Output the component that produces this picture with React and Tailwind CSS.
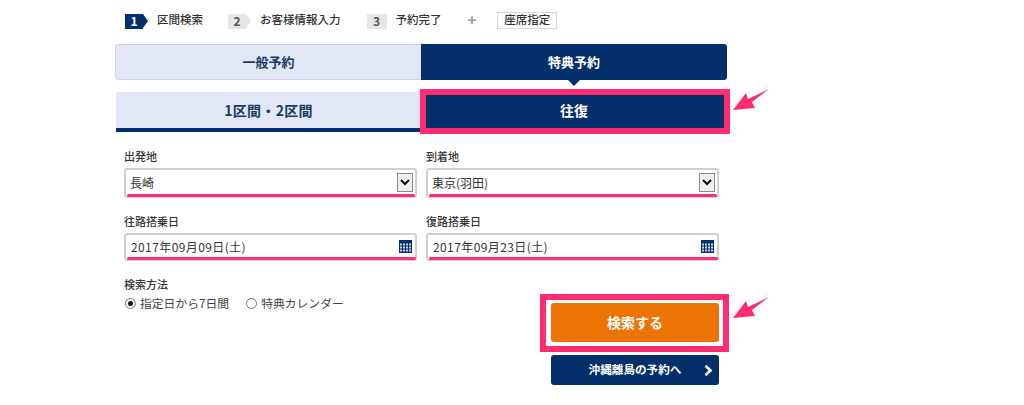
import React from 'react'

const FONT = { fontFamily: '"Noto Sans CJK JP", "Noto Sans", sans-serif' }

function Step({ num, label, active, arrow }) {
    return (
        <div className="flex items-center">
            <span
                className={`flex items-center justify-center mt-[2px] h-[15px] text-[12px] font-bold ${arrow ? 'w-[18px]' : 'w-[20px]'} ${active ? 'bg-[#03306b] text-white' : 'bg-[#e6e6e6] text-[#555]'}`}
            >
                {num}
            </span>
            {arrow && (
                <span
                    className={`mt-[2px] w-0 h-0 border-y-[7.5px] border-y-transparent border-l-[5px] ${active ? 'border-l-[#03306b]' : 'border-l-[#e6e6e6]'}`}
                />
            )}
            <span className="ml-[9px] text-[11.5px] font-medium text-[#333]">{label}</span>
        </div>
    )
}

function Arrow({ className }) {
    return (
        <svg className={`absolute ${className}`} width="36" height="22" viewBox="0 0 36 22">
            <path d="M0 21 L13 4 L15 10 L36 0 L19 13 L22 19 Z" fill="#ff2d6f" />
        </svg>
    )
}

function SelectField({ label, value }) {
    return (
        <div>
            <div className="text-[11px] font-medium text-[#333] leading-[14px] h-[14px]">{label}</div>
            <div className="relative mt-[5px] h-[30px] rounded-[3px] border-2 border-[#cfcfcf] bg-white flex items-center justify-between pl-[4px] pr-[2px]">
                <span className="text-[12px] text-[#333]">{value}</span>
                <span className="w-[16px] h-[19px] -mt-[2px] border border-[#8a8a8a] bg-[#efefef] flex items-center justify-center">
                    <svg width="10" height="7" viewBox="0 0 10 7">
                        <path d="M1 1 L5 5 L9 1" fill="none" stroke="#111" strokeWidth="2" />
                    </svg>
                </span>
                <div className="absolute left-[1px] right-[0px] -bottom-[1px] h-[3px] rounded-full bg-[#ff2d6f]" />
            </div>
        </div>
    )
}

function DateField({ label, value }) {
    return (
        <div className="mt-[16px]">
            <div className="text-[11px] font-medium text-[#333] leading-[14px] h-[14px]">{label}</div>
            <div className="relative mt-[5px] h-[28px] rounded-[3px] border-2 border-[#cfcfcf] bg-white flex items-center justify-between pl-[5px] pr-[3px]">
                <span className="text-[12px] text-[#333] tracking-[0.4px] -mt-[1px]">{value}</span>
                <svg width="13" height="13" viewBox="0 0 13 13" className="-mt-[1px]">
                    <rect width="13" height="13" fill="#03306b" />
                    {[1, 4, 7, 10].map((x) =>
                        [3, 6, 9].map((y) => (
                            <rect key={`${x}-${y}`} x={x} y={y + 0.5} width="2" height="2" fill="#c9d3e4" />
                        ))
                    )}
                </svg>
                <div className="absolute left-[1px] -right-[1px] -bottom-[1px] h-[3px] rounded-full bg-[#ff2d6f]" />
            </div>
        </div>
    )
}

function Radio({ checked, label }) {
    return (
        <div className="flex items-center">
            <span className="w-[11px] h-[11px] rounded-full border border-[#777] bg-white flex items-center justify-center">
                {checked && <span className="w-[5px] h-[5px] rounded-full bg-[#111]" />}
            </span>
            <span className="ml-[4px] text-[11.8px] text-[#444]">{label}</span>
        </div>
    )
}

export default function App() {
    return (
        <div className="relative w-[1024px] h-[405px] bg-white overflow-hidden" style={FONT}>
            {/* Steps */}
            <div className="flex items-center h-[18px] mt-[11px] ml-[125px]">
                <Step num="1" label="区間検索" active arrow />
                <div className="ml-[25px]"><Step num="2" label="お客様情報入力" arrow /></div>
                <div className="ml-[26px]"><Step num="3" label="予約完了" /></div>
                <span className="ml-[26px] text-[15px] font-bold text-[#999]">+</span>
                <span className="ml-[21px] w-[60px] h-[17px] border border-[#d4d4d4] flex items-center justify-center text-[11.5px] font-medium text-[#333]">
                    座席指定
                </span>
            </div>

            <div className="ml-[115px] w-[612px] mt-[15px]">
                {/* Reservation type */}
                <div className="flex h-[36px]">
                    <div className="w-[306px] rounded-l-[3px] border border-[#ccd4ea] border-r-0 bg-[#e2e7f6] flex items-center justify-center text-[13px] font-bold text-[#1d3a66]">
                        一般予約
                    </div>
                    <div className="relative w-[306px] rounded-r-[3px] bg-[#03306b] flex items-center justify-center text-[13px] font-bold text-white">
                        特典予約
                        <span className="absolute left-1/2 -translate-x-1/2 -bottom-[6px] w-0 h-0 border-x-[6px] border-x-transparent border-t-[6px] border-t-[#03306b]" />
                    </div>
                </div>

                {/* Route type */}
                <div className="flex h-[40px] mt-[12px]">
                    <div className="w-[305px] ml-[1px] rounded-tl-[3px] bg-[#e2e7f6] border-b-[4px] border-[#03306b] flex items-center justify-center text-[14px] tracking-[0.3px] font-bold text-[#1d3a66]">
                        1区間・2区間
                    </div>
                    <div className="relative w-[306px] bg-[#03306b] pb-[4px] flex items-center justify-center text-[14px] font-bold text-white">
                        往復
                        <div className="absolute -left-[1px] -right-[3px] -top-[3px] -bottom-[2px] border-[6px] border-[#ff2d6f]" />
                    </div>
                </div>

                {/* Form */}
                <div className="ml-[9px] mt-[17px] w-[595px] grid grid-cols-[293px_293px] gap-x-[9px]">
                    <SelectField label="出発地" value="長崎" />
                    <SelectField label="到着地" value="東京(羽田)" />
                    <DateField label="往路搭乗日" value="2017年09月09日(土)" />
                    <DateField label="復路搭乗日" value="2017年09月23日(土)" />
                </div>

                <div className="ml-[9px] mt-[16px] text-[11px] font-medium text-[#333] leading-[14px]">検索方法</div>
                <div className="ml-[10px] mt-[3px] flex items-center gap-[17px] h-[18px]">
                    <Radio checked label="指定日から7日間" />
                    <Radio label="特典カレンダー" />
                </div>
            </div>

            {/* Buttons */}
            <div className="absolute left-[551px] top-[303px] w-[168px]">
                <div className="relative h-[39px] rounded-[3px] bg-[#ec7405] flex items-center justify-center text-[14px] font-bold text-white">
                    検索する
                    <div className="absolute -left-[11px] -right-[10px] -top-[9px] -bottom-[10px] border-[6px] border-[#ff2d6f]" />
                </div>
                <div className="relative mt-[13px] h-[30px] rounded-[3px] bg-[#03306b] flex items-center justify-center text-[11.6px] font-bold text-white">
                    沖縄離島の予約へ
                    <svg className="absolute right-[6px] top-[10px]" width="9" height="11" viewBox="0 0 9 11">
                        <path d="M1.5 0.8 L6.5 5.5 L1.5 10.2" fill="none" stroke="#fff" strokeWidth="2.6" />
                    </svg>
                </div>
            </div>

            <Arrow className="left-[733px] top-[89px]" />
            <Arrow className="left-[733px] top-[297px]" />
        </div>
    )
}
